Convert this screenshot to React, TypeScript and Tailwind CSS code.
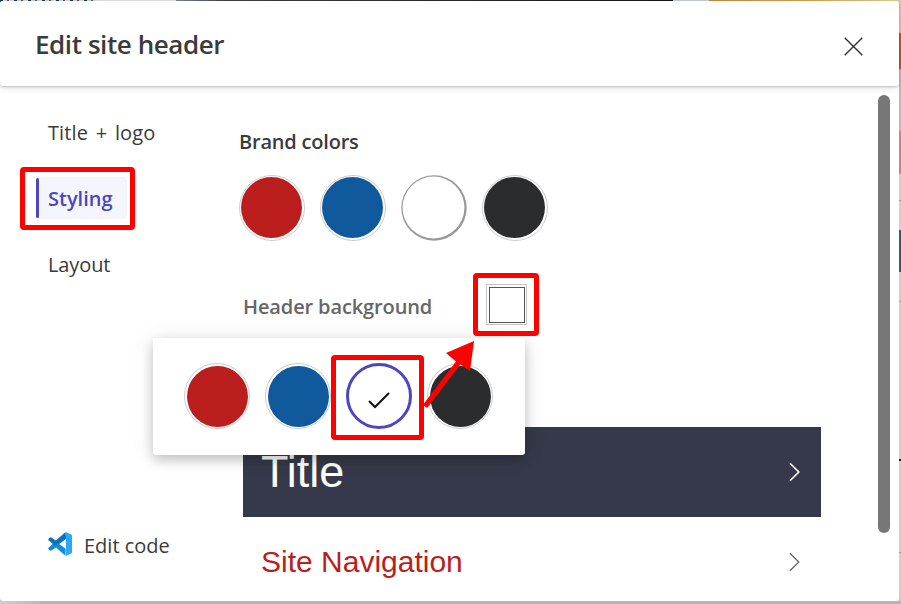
import type { ReactNode } from "react";

const SANS = "font-['Open_Sans','Noto_Sans',sans-serif]";

function Swatch({ fill, inset = "pt-px pl-px" }: { fill: string; inset?: string }) {
  return (
    <span className={`size-[66px] shrink-0 rounded-full border border-[#cbcbcb] bg-white ${inset}`}>
      <span className={`block size-[61px] rounded-full ${fill}`} />
    </span>
  );
}

function Label({ className, children }: { className: string; children: ReactNode }) {
  return <span className={`block whitespace-nowrap ${className}`}>{children}</span>;
}

function Chevron({ className, width }: { className: string; width: number }) {
  return (
    <svg className={className} width="12" height="20" viewBox="0 0 12 20" fill="none" stroke="currentColor" strokeWidth={width}>
      <path d="M1 1.2 9.8 10 1 18.8" />
    </svg>
  );
}

function CodeLogo() {
  return (
    <svg width="24" height="24" viewBox="0 0 24 24">
      <path fill="#128bd8" d="M17.4 23.7 8 15.4l-4.7 3.2a1 1 0 0 1-1.2 0L.6 17.2a1 1 0 0 1 0-1.5L17.4.4l.6 6.6Z" />
      <path fill="#0873bd" d="M17.4.3 8 8.6 3.3 5.4a1 1 0 0 0-1.2 0L.6 6.8a1 1 0 0 0 0 1.5L6 13l5-1 7-5Z" />
      <path fill="#29a8f4" d="M17.2.3a1.4 1.4 0 0 1 1.2 0l4.8 2.3c.5.2.8.7.8 1.2v16.4c0 .5-.3 1-.8 1.2l-4.8 2.3a1.4 1.4 0 0 1-1.2 0c.5.1.8-.2.8-.8V1.1c0-.6-.3-.9-.8-.8Z" />
      <path fill="#fff" d="M18 7 11.2 12l6.8 5Z" />
    </svg>
  );
}

export default function App() {
  return (
    <div className={`relative h-[604px] w-[901px] overflow-hidden bg-[#b9b9b9] pt-px ${SANS}`}>
      {/* page visible behind the dialog */}
      <div className="absolute inset-x-0 top-0 flex h-1.5">
        <div className="w-24 bg-[repeating-linear-gradient(90deg,#293846_0_3px,#c5dbe7_3px_7px,#704c48_7px_9px,#dedede_9px_14px)]" />
        <div className="w-20 bg-[#e5e5e5]" />
        <div className="w-[497px] bg-linear-to-r from-[#7c8794] via-[#423e4b] via-10% to-[#16151c]" />
        <div className="w-9 bg-[#c7ced4]" />
        <div className="grow bg-linear-to-r from-[#c78d46] via-[#d5a151] to-[#e2d09a]" />
      </div>
      <div className="absolute top-0 right-0 flex h-full w-1.5 flex-col bg-[#cfcfcf]">
        <div className="h-[33px] bg-[#d9c99b]" />
        <div className="h-9 bg-[#b65d16]" />
        <div className="h-[62px] bg-[#b7bac3]" />
        <div className="h-[43px] bg-[#bd8b7b]" />
        <div className="h-[27px] border-b border-[#999]" />
        <div className="mt-[29px] h-[42px] bg-[#17677e]" />
        <div className="h-[30px] border-b border-[#999]" />
        <div className="mt-[157px] h-0.5 bg-[#17202a]" />
        <div className="mt-[91px] h-px bg-[#999]" />
      </div>
      <div className="absolute inset-x-0 bottom-0 h-[3px] bg-linear-to-r from-[#d0d0d0] to-[#b5b5b5] to-5%" />

      <main className="relative flex h-[600px] w-[899px] flex-col rounded-[3px] bg-white">
        <header className="relative flex h-[85px] shrink-0 items-center justify-between rounded-[3px] bg-white pr-9 pl-[35px] shadow-[0_1px_2px_rgba(0,0,0,0.18),0_2px_6px_rgba(0,0,0,0.12)]">
          <Label className="text-[26px] leading-9 font-semibold tracking-[-0.42px] text-[#3b3b3b]">Edit site header</Label>
          <svg className="mt-[5px]" width="19" height="19" viewBox="0 0 19 19" stroke="#333" strokeWidth="1.4">
            <path d="m.7.7 17.6 17.6M18.3.7.7 18.3" />
          </svg>
        </header>

        <div className="flex min-h-0 grow">
          <nav className="flex w-[239px] flex-col pt-[31px] pl-9 text-[20px] text-[#3b3a39]">
            <Label className="pl-3 leading-8 tracking-[0.1px] [word-spacing:2.4px]">Title + logo</Label>
            <div className="mt-7 flex h-[42px] w-[91px] items-center rounded bg-[#f5f6fc]">
              <span className="h-10 w-[3px] rounded-sm bg-[#4b46c1]" />
              <Label className="mt-0.5 ml-[9px] font-semibold text-[#4b46c1]">Styling</Label>
            </div>
            <Label className="mt-[30px] pl-3 leading-8 tracking-[-0.1px]">Layout</Label>
            <div className="mt-auto mb-10 flex items-center gap-3 pl-3">
              <span className="-mt-0.5">
                <CodeLogo />
              </span>
              <Label className="mt-px -mb-px leading-8">Edit code</Label>
            </div>
          </nav>

          <section className="flex w-[639px] flex-col pt-10">
            <Label className="text-[20px] leading-8 font-semibold tracking-[-0.2px] text-[#3b3b3b]">Brand colors</Label>
            <div className="mt-[17px] flex gap-[15px]">
              <Swatch fill="bg-[#bc1d1d]" />
              <Swatch fill="bg-[#10599c]" />
              <svg width="66" height="66" viewBox="0 0 66 66">
                <circle cx="33" cy="33" r="32.7" fill="#9a9a9a" />
                <circle cx="32.5" cy="32.5" r="30.9" fill="#fff" />
              </svg>
              <Swatch fill="bg-[#2b2c2e]" />
            </div>
            <div className="mt-[43px] flex h-[41px] w-[288px] items-center justify-between pl-1">
              <Label className="mt-[5px] text-[20px] font-semibold tracking-[-0.12px] text-[#666]">Header background</Label>
              <span className="flex size-[41px] items-center justify-center border border-[#c5c5c5]">
                <span className="size-9 border border-[#555] bg-white" />
              </span>
            </div>
            <div className="mt-[102px] ml-1 flex h-[90px] w-[578px] items-center justify-between bg-[#363949] pr-5 pl-[18px] text-white">
              <Label className="font-['Liberation_Sans',Arial,sans-serif] text-[45px] leading-[50px]">Title</Label>
              <Chevron className="text-white" width={1.6} />
            </div>
            <div className="ml-1 flex h-[84px] w-[578px] items-center justify-between pt-1.5 pr-5 pl-[18px]">
              <Label className="-mt-px font-['Liberation_Sans',Arial,sans-serif] text-[30px] text-[#bc1d1d]">Site Navigation</Label>
              <Chevron className="text-[#666]" width={1.3} />
            </div>
          </section>
          <div className="mt-[9px] h-[438px] w-3 rounded-full bg-[#777]" />
        </div>
      </main>

      {/* color picker popup */}
      <div className="absolute top-[338px] left-[153px] flex h-[117px] w-[372px] items-start gap-[15px] rounded-[3px] bg-white pt-[25px] pl-[31px] shadow-[0_5px_12px_rgba(0,0,0,0.2),0_1px_25px_rgba(0,0,0,0.09)]">
        <Swatch fill="bg-[#bc1d1d]" inset="pt-0.5 pl-0.5" />
        <Swatch fill="bg-[#10599c]" inset="pt-0.5 pl-0.5" />
        <span className="flex size-[66px] items-center justify-center rounded-full border-[3px] border-[#4b46c1] bg-white">
          <svg className="mt-2.5" width="22" height="18" viewBox="0 0 22 18" fill="none" stroke="#111" strokeWidth="2">
            <path d="m1 9 6 6L21 1" />
          </svg>
        </span>
        <Swatch fill="bg-[#2b2c2e]" inset="pt-0.5 pl-0.5" />
      </div>

      {/* red callouts */}
      <div className="absolute top-[167px] left-[20px] h-[63px] w-[115px] rounded-[4px] border-5 border-[#ff0000]" />
      <div className="absolute top-[273px] left-[473px] h-[63px] w-[66px] rounded-[4px] border-5 border-[#ff0000]" />
      <div className="absolute top-[355px] left-[331px] h-[85px] w-[93px] rounded-[4px] border-5 border-[#ff0000]" />
      <svg className="absolute top-[340px] left-[422px]" width="54" height="70" viewBox="0 0 54 70" fill="#f00">
        <path d="M52 1 24 13l10 8.5L.8 65l4.4 3L38.3 24.5 48 31Z" />
      </svg>
    </div>
  );
}
